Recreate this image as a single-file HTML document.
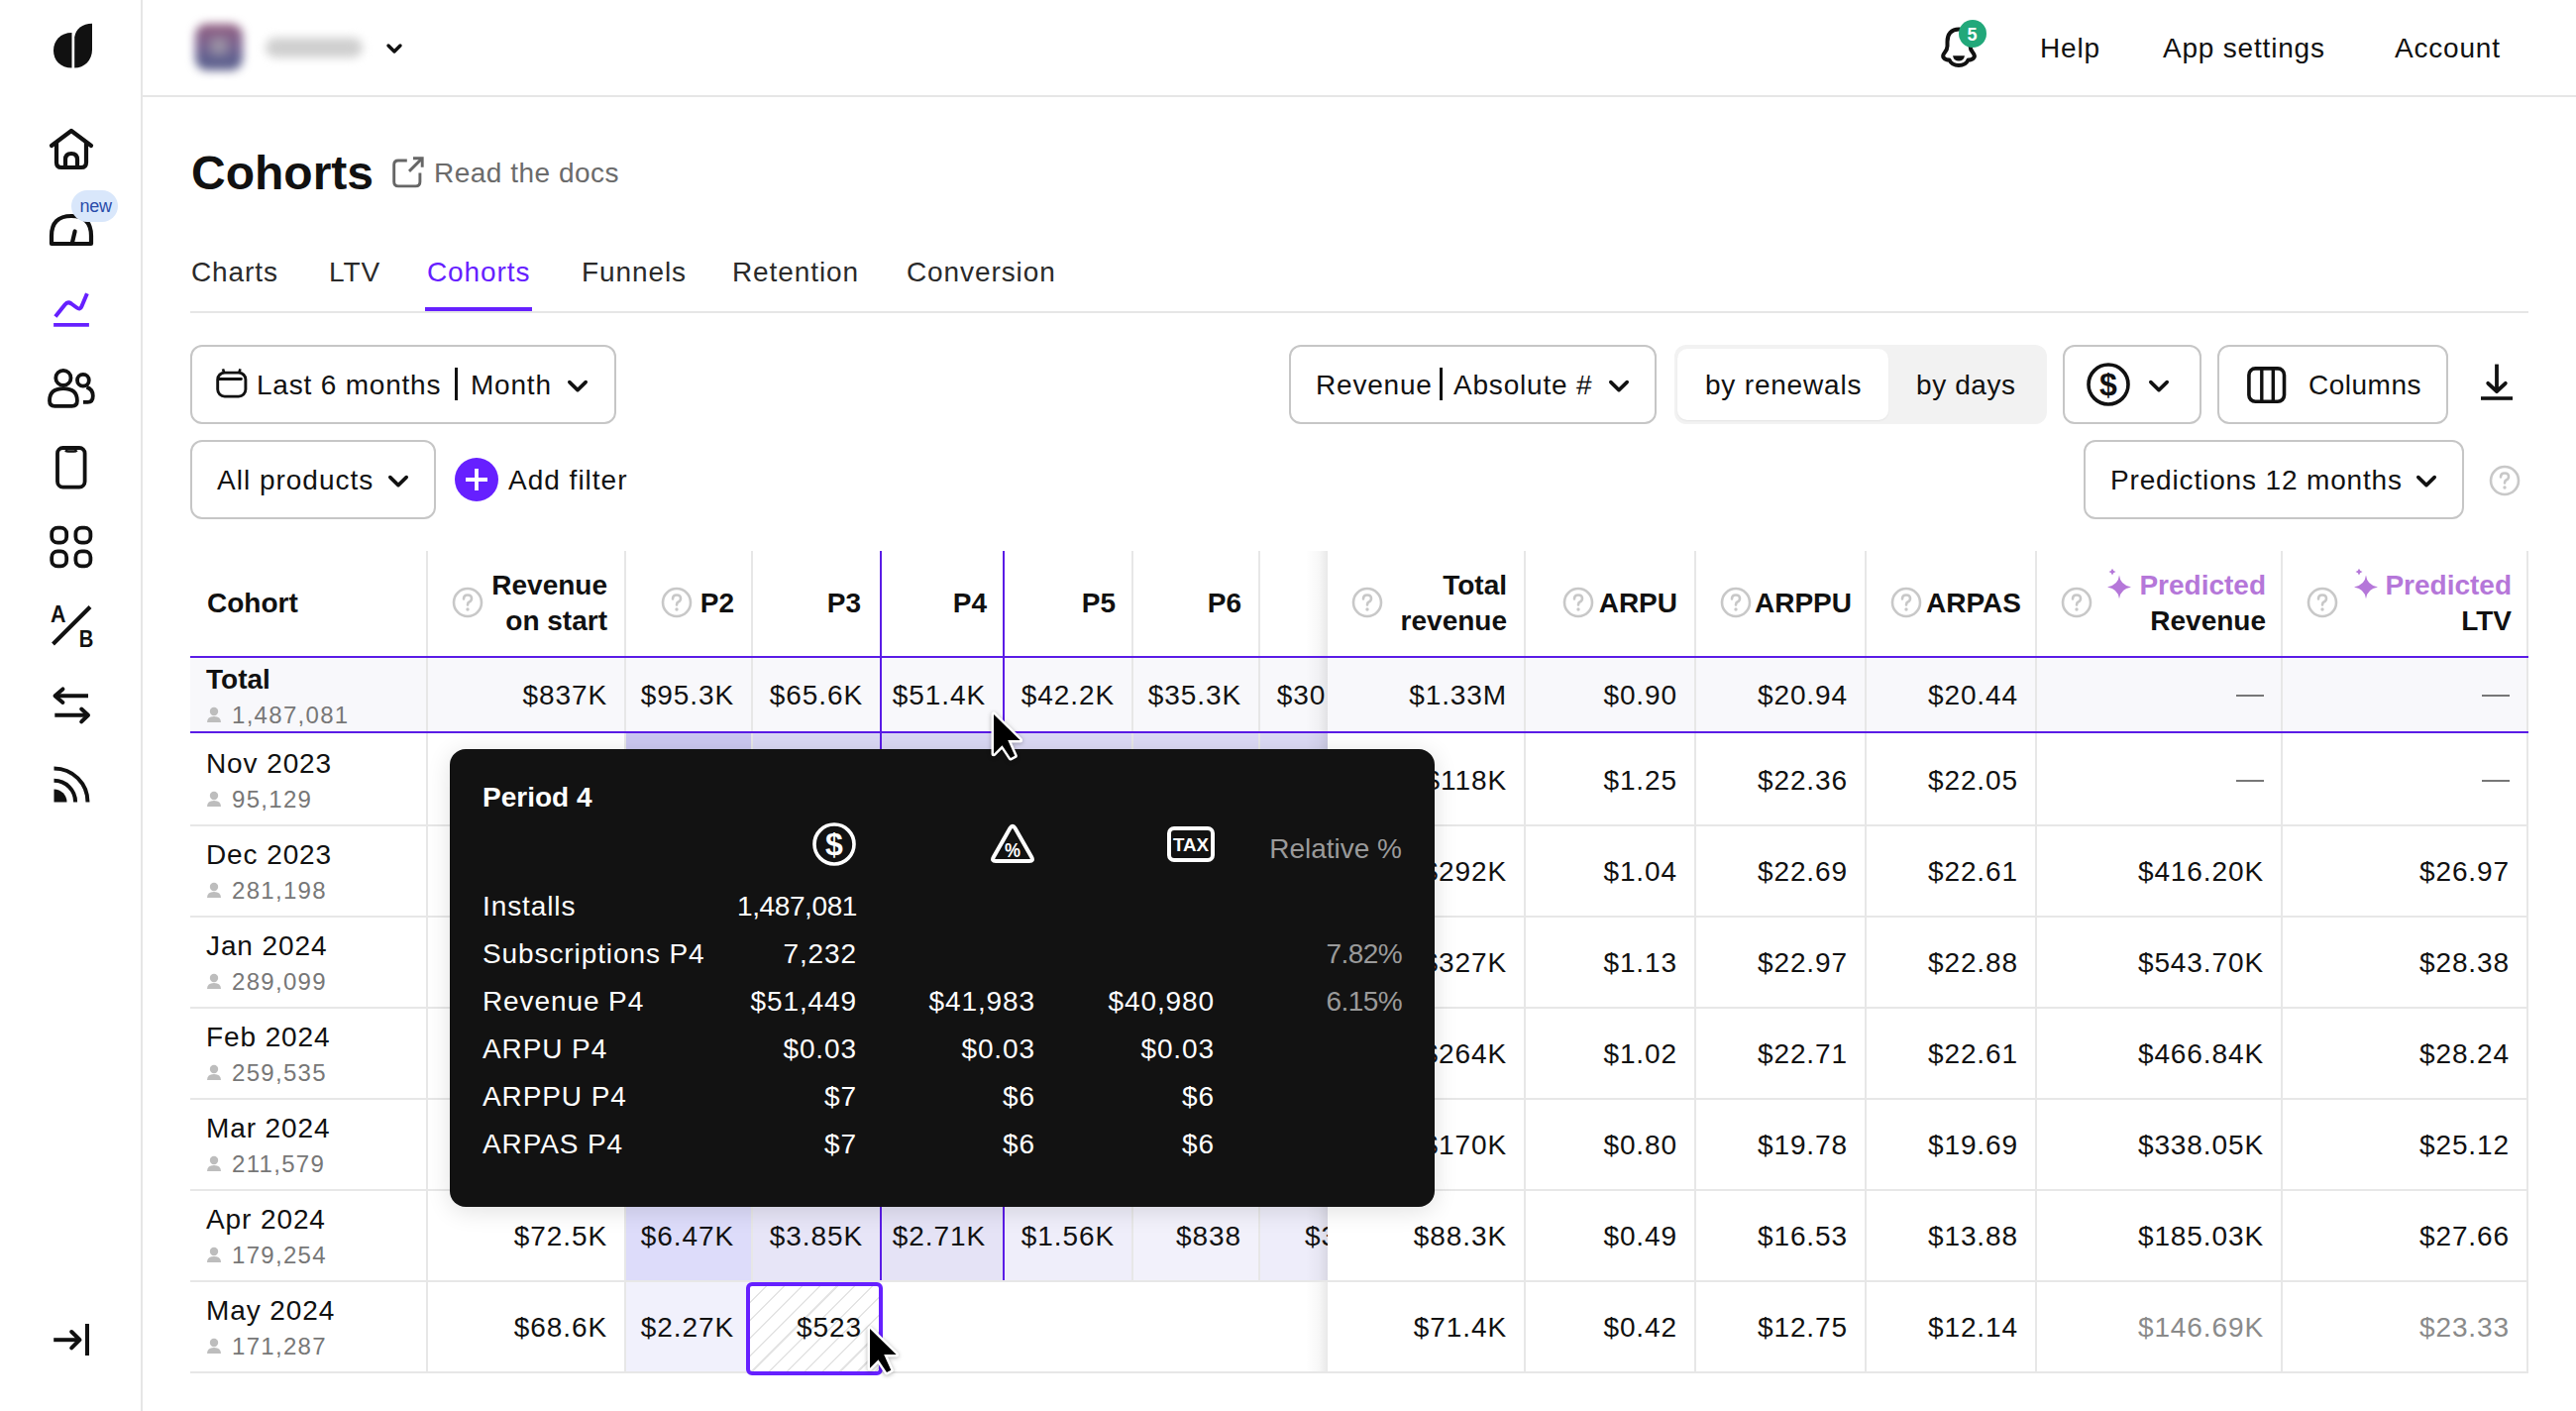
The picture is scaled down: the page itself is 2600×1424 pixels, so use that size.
<!DOCTYPE html>
<html><head><meta charset="utf-8"><style>
html,body{margin:0;padding:0;background:#fff;}
body{width:2600px;height:1424px;position:relative;overflow:hidden;font-family:"Liberation Sans",sans-serif;}
.t{position:absolute;white-space:nowrap;}
.b{position:absolute;}
</style></head><body>
<div class="b" style="left:142px;top:0px;width:2px;height:1424px;background:#e6e6e6"></div>
<svg class="b" style="left:50px;top:22px;" width="48" height="50" viewBox="0 0 48 50" fill="none"><path d="M22.5 11 C11 11 4 19 4 29 C4 39 11 46.5 22.5 46.5 Z" fill="#111"/><path d="M25.2 46.5 V15.5 C26.5 7 33 2 43 1.8 V28 C43 39 35 46.5 25.2 46.5 Z" fill="#111"/></svg>
<svg class="b" style="left:48px;top:128px;" width="48" height="46" viewBox="0 0 48 46" fill="none"><path d="M4 19 L24 4 L44 19" stroke="#111" stroke-width="4.2" stroke-linecap="round" stroke-linejoin="round"/><path d="M9 15 V36 Q9 41 14 41 H34 Q39 41 39 36 V15" stroke="#111" stroke-width="4.2" stroke-linejoin="round"/><path d="M18 41 V33 Q18 27 24 27 Q30 27 30 33 V41" stroke="#111" stroke-width="4.2"/></svg>
<svg class="b" style="left:48px;top:207px;" width="48" height="44" viewBox="0 0 48 44" fill="none"><path d="M4 39 V31 Q4 11 24 11 Q44 11 44 31 V39 Z" stroke="#111" stroke-width="4.2" stroke-linejoin="round"/><path d="M24.9 38 L27.6 26.5" stroke="#111" stroke-width="4.2" stroke-linecap="round"/></svg>
<div class="b" style="left:72px;top:192px;width:47px;height:32px;background:#d9e7fb;border-radius:16px"></div>
<div class="t " style="top:199.06px;font-size:18px;line-height:18px;color:#2a4caa;font-weight:400;letter-spacing:-0.3px;left:80.5px;">new</div>
<svg class="b" style="left:50px;top:288px;" width="46" height="46" viewBox="0 0 46 46" fill="none"><path d="M5.9 31.6 L15.5 19.5 Q18.3 16 22 18.5 L27.5 22.5 Q31 25 32.5 21 L37.9 8.3" stroke="#6620ff" stroke-width="4" stroke-linejoin="round"/><path d="M4.1 39.9 H39.9" stroke="#6620ff" stroke-width="3.8"/></svg>
<svg class="b" style="left:46px;top:366px;" width="52" height="48" viewBox="0 0 52 48" fill="none"><circle cx="17.9" cy="15.4" r="7.6" stroke="#111" stroke-width="3.8"/><path d="M4 38.5 Q4 26.2 18 26.2 Q31.9 26.2 31.9 38.5 Q31.9 43.8 26.6 43.8 H9.3 Q4 43.8 4 38.5 Z" stroke="#111" stroke-width="3.8" stroke-linejoin="round"/><circle cx="37.9" cy="17.7" r="5.9" stroke="#111" stroke-width="3.8"/><path d="M38 39.9 H42.5 Q47.8 39.9 47.8 33.5 Q47.8 27 41.5 24.6" stroke="#111" stroke-width="3.8"/></svg>
<svg class="b" style="left:48px;top:446px;" width="48" height="48" viewBox="0 0 48 48" fill="none"><rect x="10" y="6" width="27.6" height="39.6" rx="5.5" stroke="#111" stroke-width="3.8"/><path d="M18 8.3 Q19 9.5 21 9.5 H26.6 Q28.6 9.5 29.6 8.3" stroke="#111" stroke-width="2.6"/></svg>
<svg class="b" style="left:46px;top:524px;" width="52" height="52" viewBox="0 0 52 52" fill="none"><rect x="6.2" y="8.7" width="15" height="15" rx="6" stroke="#111" stroke-width="3.8"/><rect x="30.4" y="8.7" width="15" height="15" rx="6" stroke="#111" stroke-width="3.8"/><rect x="6.2" y="32.4" width="15" height="15" rx="6" stroke="#111" stroke-width="3.8"/><rect x="30.4" y="32.4" width="15" height="15" rx="6" stroke="#111" stroke-width="3.8"/></svg>
<svg class="b" style="left:46px;top:602px;" width="52" height="52" viewBox="0 0 52 52" fill="none"><path d="M7.5 48 L45 10.5" stroke="#111" stroke-width="4"/><text x="5" y="25.5" font-family="Liberation Sans" font-weight="700" font-size="24" textLength="15.5" lengthAdjust="spacingAndGlyphs" fill="#111">A</text><text x="33.8" y="50.8" font-family="Liberation Sans" font-weight="700" font-size="23.5" textLength="14.6" lengthAdjust="spacingAndGlyphs" fill="#111">B</text></svg>
<svg class="b" style="left:46px;top:684px;" width="52" height="50" viewBox="0 0 52 50" fill="none"><path d="M9.5 18.2 H43" stroke="#111" stroke-width="4"/><path d="M17.4 11.4 L9.5 18.2 L17.4 25" stroke="#111" stroke-width="4" stroke-linecap="round" stroke-linejoin="round"/><path d="M9.3 37.8 H42.5" stroke="#111" stroke-width="4"/><path d="M36.2 31.6 L43 37.8 L36.2 44.4" stroke="#111" stroke-width="4" stroke-linecap="round" stroke-linejoin="round"/></svg>
<svg class="b" style="left:46px;top:762px;" width="52" height="50" viewBox="0 0 52 50" fill="none"><path d="M8.5 13.4 A34 34 0 0 1 42.5 47.4" stroke="#111" stroke-width="4"/><path d="M8.5 25.8 A21.6 21.6 0 0 1 30.1 47.4" stroke="#111" stroke-width="4"/><path d="M8.5 47.4 V34.4 A13 13 0 0 1 21.5 47.4 Z" fill="#111"/></svg>
<svg class="b" style="left:50px;top:1330px;" width="46" height="42" viewBox="0 0 46 42" fill="none"><path d="M4.2 22.2 H30" stroke="#111" stroke-width="4"/><path d="M22.2 14 L30.5 22.2 L22.2 30.4" stroke="#111" stroke-width="4" stroke-linecap="round" stroke-linejoin="round"/><path d="M38 6 V38" stroke="#111" stroke-width="4"/></svg>
<div class="b" style="left:144px;top:96px;width:2456px;height:2px;background:#e6e6e6"></div>
<div class="b" style="left:197px;top:24px;width:48px;height:47px;background:radial-gradient(circle at 50% 48%, #a6a2ac 0, rgba(166,162,172,0.6) 18%, rgba(0,0,0,0) 40%),linear-gradient(180deg,#935f80 0%,#7a6390 45%,#5e6290 80%,#5b5b88 100%);border-radius:12px;filter:blur(5px)"></div>
<div class="b" style="left:268px;top:38px;width:98px;height:20px;background:#cfcfcf;border-radius:10px;filter:blur(5px)"></div>
<svg class="b" style="left:389px;top:43px;" width="18" height="12" viewBox="0 0 18 12" fill="none"><path d="M3 3 L9 9 L15 3" stroke="#111" stroke-width="3.4" stroke-linecap="round" stroke-linejoin="round"/></svg>
<svg class="b" style="left:1956px;top:26px;" width="44" height="46" viewBox="0 0 44 46" fill="none"><path d="M21 3.5 C13.5 3.5 9.5 8.5 9.5 16 V20.5 Q9.5 24 6.5 27.5 Q4 30.5 6 32.5 Q7.5 34.5 11.5 34.5 Q14 40 21 40 Q28 40 30.5 34.5 Q34.5 34.5 36 32.5 Q38 30.5 35.5 27.5 Q32.5 24 32.5 20.5 V16 C32.5 8.5 28.5 3.5 21 3.5 Z" stroke="#111" stroke-width="4" stroke-linejoin="round"/><path d="M15 30.2 H27 Q26 35.6 21 35.6 Q16 35.6 15 30.2 Z" fill="#111"/></svg>
<div class="b" style="left:1977px;top:20px;width:28px;height:28px;background:#22a87a;border-radius:50%"></div>
<div class="t " style="top:25.56px;font-size:18px;line-height:18px;color:#fff;font-weight:700;letter-spacing:0.0px;left:1985.5px;">5</div>
<div class="t " style="top:35.10px;font-size:28px;line-height:28px;color:#111;font-weight:400;letter-spacing:0.8px;left:2059px;">Help</div>
<div class="t " style="top:35.10px;font-size:28px;line-height:28px;color:#111;font-weight:400;letter-spacing:0.8px;left:2183px;">App settings</div>
<div class="t " style="top:35.10px;font-size:28px;line-height:28px;color:#111;font-weight:400;letter-spacing:0.8px;left:2417px;">Account</div>
<div class="t " style="top:151.17px;font-size:48px;line-height:48px;color:#111;font-weight:700;letter-spacing:0.0px;left:193px;">Cohorts</div>
<svg class="b" style="left:394px;top:156px;" width="36" height="36" viewBox="0 0 36 36" fill="none"><path d="M16.8 6 H8 Q3.7 6 3.7 10.3 V27.6 Q3.7 31.9 8 31.9 H25.6 Q29.9 31.9 29.9 27.6 V18.6" stroke="#666" stroke-width="2.9"/><path d="M23 3.8 H32.2 V12.8" stroke="#666" stroke-width="2.9"/><path d="M32 3.9 L19 16.9" stroke="#666" stroke-width="2.9"/></svg>
<div class="t " style="top:161.10px;font-size:28px;line-height:28px;color:#6b6b6b;font-weight:400;letter-spacing:0.5px;left:438px;">Read the docs</div>
<div class="t " style="top:261.10px;font-size:28px;line-height:28px;color:#2a2a2a;font-weight:400;letter-spacing:0.9px;left:193px;">Charts</div>
<div class="t " style="top:261.10px;font-size:28px;line-height:28px;color:#2a2a2a;font-weight:400;letter-spacing:0.9px;left:332px;">LTV</div>
<div class="t " style="top:261.10px;font-size:28px;line-height:28px;color:#2a2a2a;font-weight:400;letter-spacing:0.9px;left:587px;">Funnels</div>
<div class="t " style="top:261.10px;font-size:28px;line-height:28px;color:#2a2a2a;font-weight:400;letter-spacing:0.9px;left:739px;">Retention</div>
<div class="t " style="top:261.10px;font-size:28px;line-height:28px;color:#2a2a2a;font-weight:400;letter-spacing:0.9px;left:915px;">Conversion</div>
<div class="t " style="top:261.10px;font-size:28px;line-height:28px;color:#6620ff;font-weight:400;letter-spacing:0.9px;left:431px;">Cohorts</div>
<div class="b" style="left:192px;top:314px;width:2360px;height:2px;background:#e6e6e6"></div>
<div class="b" style="left:429px;top:310px;width:108px;height:4px;background:#6620ff"></div>
<div class="b" style="left:192px;top:348px;width:430px;height:80px;border:2px solid #c6c6c6;border-radius:12px;box-sizing:border-box;background:#fff"></div>
<svg class="b" style="left:216px;top:370px;" width="36" height="34" viewBox="0 0 36 34" fill="none"><rect x="3.7" y="6.1" width="28.2" height="24" rx="7" stroke="#111" stroke-width="2.9"/><path d="M4.8 12.5 H27.4" stroke="#111" stroke-width="2.9" stroke-linecap="round"/><path d="M9 2.4 L10 5.5 M26.5 2.4 L25.5 5.5" stroke="#111" stroke-width="2.6"/></svg>
<div class="t " style="top:375.10px;font-size:28px;line-height:28px;color:#111;font-weight:400;letter-spacing:0.8px;left:259px;">Last 6 months</div>
<div class="b" style="left:459px;top:371px;width:3px;height:33px;background:#111"></div>
<div class="t " style="top:375.10px;font-size:28px;line-height:28px;color:#111;font-weight:400;letter-spacing:0.8px;left:475px;">Month</div>
<svg class="b" style="left:572px;top:383px;" width="22" height="14" viewBox="0 0 22 14" fill="none"><path d="M2.8 2.6 L11 10.6 L19.2 2.6" stroke="#111" stroke-width="3.6" stroke-linecap="round" stroke-linejoin="round"/></svg>
<div class="b" style="left:1301px;top:348px;width:371px;height:80px;border:2px solid #c6c6c6;border-radius:12px;box-sizing:border-box;background:#fff"></div>
<div class="t " style="top:375.10px;font-size:28px;line-height:28px;color:#111;font-weight:400;letter-spacing:0.8px;left:1328px;">Revenue</div>
<div class="b" style="left:1453px;top:371px;width:3px;height:33px;background:#111"></div>
<div class="t " style="top:375.10px;font-size:28px;line-height:28px;color:#111;font-weight:400;letter-spacing:0.8px;left:1467px;">Absolute #</div>
<svg class="b" style="left:1623px;top:383px;" width="22" height="14" viewBox="0 0 22 14" fill="none"><path d="M2.8 2.6 L11 10.6 L19.2 2.6" stroke="#111" stroke-width="3.6" stroke-linecap="round" stroke-linejoin="round"/></svg>
<div class="b" style="left:1690px;top:348px;width:376px;height:80px;background:#f2f2f2;border-radius:12px"></div>
<div class="b" style="left:1693px;top:352px;width:213px;height:72px;background:#fff;border-radius:10px;box-shadow:0 1px 2px rgba(0,0,0,0.06)"></div>
<div class="t " style="top:375.10px;font-size:28px;line-height:28px;color:#111;font-weight:400;letter-spacing:0.8px;left:1721px;">by renewals</div>
<div class="t " style="top:375.10px;font-size:28px;line-height:28px;color:#111;font-weight:400;letter-spacing:0.6px;left:1934px;">by days</div>
<div class="b" style="left:2082px;top:348px;width:140px;height:80px;border:2px solid #c6c6c6;border-radius:12px;box-sizing:border-box;background:#fff"></div>
<svg class="b" style="left:2104px;top:364px;" width="48" height="48" viewBox="0 0 48 48" fill="none"><circle cx="24" cy="24" r="20" stroke="#111" stroke-width="3.6"/><text x="24" y="35" text-anchor="middle" font-family="Liberation Sans" font-weight="700" font-size="32" fill="#111">$</text></svg>
<svg class="b" style="left:2168px;top:383px;" width="22" height="14" viewBox="0 0 22 14" fill="none"><path d="M2.8 2.6 L11 10.6 L19.2 2.6" stroke="#111" stroke-width="3.6" stroke-linecap="round" stroke-linejoin="round"/></svg>
<div class="b" style="left:2238px;top:348px;width:233px;height:80px;border:2px solid #c6c6c6;border-radius:12px;box-sizing:border-box;background:#fff"></div>
<svg class="b" style="left:2266px;top:368px;" width="44" height="40" viewBox="0 0 44 40" fill="none"><rect x="3.9" y="3.9" width="35.6" height="33.4" rx="6.5" stroke="#111" stroke-width="3.6"/><path d="M16.8 3.9 V37 M28.3 3.9 V37" stroke="#111" stroke-width="3.4"/></svg>
<div class="t " style="top:375.10px;font-size:28px;line-height:28px;color:#111;font-weight:400;letter-spacing:0.5px;left:2330px;">Columns</div>
<svg class="b" style="left:2500px;top:366px;" width="40" height="40" viewBox="0 0 40 40" fill="none"><path d="M20 1.6 V28" stroke="#111" stroke-width="3.8"/><path d="M11.2 20.8 L20 29 L28.8 20.8" stroke="#111" stroke-width="3.8" stroke-linecap="round" stroke-linejoin="round"/><path d="M4 36 H36" stroke="#111" stroke-width="3.6"/></svg>
<div class="b" style="left:192px;top:444px;width:248px;height:80px;border:2px solid #c6c6c6;border-radius:12px;box-sizing:border-box;background:#fff"></div>
<div class="t " style="top:471.10px;font-size:28px;line-height:28px;color:#111;font-weight:400;letter-spacing:1.0px;left:219px;">All products</div>
<svg class="b" style="left:391px;top:479px;" width="22" height="14" viewBox="0 0 22 14" fill="none"><path d="M2.8 2.6 L11 10.6 L19.2 2.6" stroke="#111" stroke-width="3.6" stroke-linecap="round" stroke-linejoin="round"/></svg>
<div class="b" style="left:459px;top:462px;width:44px;height:44px;background:#6620ff;border-radius:50%"></div>
<svg class="b" style="left:459px;top:462px;" width="44" height="44" viewBox="0 0 44 44" fill="none"><path d="M22 11 V33 M11 22 H33" stroke="#fff" stroke-width="3.8"/></svg>
<div class="t " style="top:471.10px;font-size:28px;line-height:28px;color:#111;font-weight:400;letter-spacing:1.0px;left:513px;">Add filter</div>
<div class="b" style="left:2103px;top:444px;width:384px;height:80px;border:2px solid #c6c6c6;border-radius:12px;box-sizing:border-box;background:#fff"></div>
<div class="t " style="top:471.10px;font-size:28px;line-height:28px;color:#111;font-weight:400;letter-spacing:0.85px;left:2130px;">Predictions 12 months</div>
<svg class="b" style="left:2438px;top:479px;" width="22" height="14" viewBox="0 0 22 14" fill="none"><path d="M2.8 2.6 L11 10.6 L19.2 2.6" stroke="#111" stroke-width="3.6" stroke-linecap="round" stroke-linejoin="round"/></svg>
<svg class="b" style="left:2512px;top:469px;" width="32" height="32" viewBox="0 0 32 32" fill="none"><circle cx="16" cy="16" r="14" stroke="#c8c8c8" stroke-width="2.6"/><path d="M12 12.5 Q12 8.5 16 8.5 Q20 8.5 20 12 Q20 14.5 17.5 15.5 Q16 16.2 16 18.5" stroke="#c8c8c8" stroke-width="2.6" stroke-linecap="round" fill="none"/><circle cx="16" cy="23" r="1.7" fill="#c8c8c8"/></svg>
<div class="b" style="left:192px;top:664px;width:1148px;height:74px;background:#f8f8fb"></div>
<div class="b" style="left:632px;top:740px;width:126px;height:92px;background:#cbc7f1"></div>
<div class="b" style="left:760px;top:740px;width:128px;height:92px;background:#dad8f4"></div>
<div class="b" style="left:890px;top:740px;width:122px;height:92px;background:#dad8f4"></div>
<div class="b" style="left:1014px;top:740px;width:128px;height:92px;background:#dcdaf5"></div>
<div class="b" style="left:1144px;top:740px;width:126px;height:92px;background:#dcdaf5"></div>
<div class="b" style="left:1272px;top:740px;width:128px;height:92px;background:#dcdaf5"></div>
<div class="b" style="left:632px;top:834px;width:126px;height:90px;background:#d9d6f6"></div>
<div class="b" style="left:760px;top:834px;width:128px;height:90px;background:#e3e1f7"></div>
<div class="b" style="left:890px;top:834px;width:122px;height:90px;background:#e3e1f7"></div>
<div class="b" style="left:1014px;top:834px;width:128px;height:90px;background:#e8e7f8"></div>
<div class="b" style="left:1144px;top:834px;width:126px;height:90px;background:#ecebfa"></div>
<div class="b" style="left:1272px;top:834px;width:128px;height:90px;background:#ecebfa"></div>
<div class="b" style="left:632px;top:926px;width:126px;height:90px;background:#d9d6f6"></div>
<div class="b" style="left:760px;top:926px;width:128px;height:90px;background:#e3e1f7"></div>
<div class="b" style="left:890px;top:926px;width:122px;height:90px;background:#e3e1f7"></div>
<div class="b" style="left:1014px;top:926px;width:128px;height:90px;background:#e8e7f8"></div>
<div class="b" style="left:1144px;top:926px;width:126px;height:90px;background:#ecebfa"></div>
<div class="b" style="left:1272px;top:926px;width:128px;height:90px;background:#ecebfa"></div>
<div class="b" style="left:632px;top:1018px;width:126px;height:90px;background:#d9d6f6"></div>
<div class="b" style="left:760px;top:1018px;width:128px;height:90px;background:#e3e1f7"></div>
<div class="b" style="left:890px;top:1018px;width:122px;height:90px;background:#e3e1f7"></div>
<div class="b" style="left:1014px;top:1018px;width:128px;height:90px;background:#e8e7f8"></div>
<div class="b" style="left:1144px;top:1018px;width:126px;height:90px;background:#ecebfa"></div>
<div class="b" style="left:1272px;top:1018px;width:128px;height:90px;background:#ecebfa"></div>
<div class="b" style="left:632px;top:1110px;width:126px;height:90px;background:#d9d6f6"></div>
<div class="b" style="left:760px;top:1110px;width:128px;height:90px;background:#e3e1f7"></div>
<div class="b" style="left:890px;top:1110px;width:122px;height:90px;background:#e3e1f7"></div>
<div class="b" style="left:1014px;top:1110px;width:128px;height:90px;background:#e8e7f8"></div>
<div class="b" style="left:1144px;top:1110px;width:126px;height:90px;background:#ecebfa"></div>
<div class="b" style="left:1272px;top:1110px;width:128px;height:90px;background:#ecebfa"></div>
<div class="b" style="left:632px;top:1202px;width:126px;height:90px;background:#dddcfa"></div>
<div class="b" style="left:760px;top:1202px;width:128px;height:90px;background:#e7e5f7"></div>
<div class="b" style="left:890px;top:1202px;width:122px;height:90px;background:#e5e3f6"></div>
<div class="b" style="left:1014px;top:1202px;width:128px;height:90px;background:#efeefa"></div>
<div class="b" style="left:1144px;top:1202px;width:126px;height:90px;background:#f2f1fb"></div>
<div class="b" style="left:1272px;top:1202px;width:128px;height:90px;background:#eeedfa"></div>
<div class="b" style="left:632px;top:1294px;width:126px;height:90px;background:#f1f1fc"></div>
<div class="b" style="left:430px;top:556px;width:2px;height:828px;background:#e7e7e7"></div>
<div class="b" style="left:630px;top:556px;width:2px;height:828px;background:#e7e7e7"></div>
<div class="b" style="left:758px;top:556px;width:2px;height:828px;background:#e7e7e7"></div>
<div class="b" style="left:1142px;top:556px;width:2px;height:736px;background:#e7e7e7"></div>
<div class="b" style="left:1270px;top:556px;width:2px;height:736px;background:#e7e7e7"></div>
<div class="b" style="left:888px;top:556px;width:2px;height:736px;background:#5a1ce6"></div>
<div class="b" style="left:1012px;top:556px;width:2px;height:736px;background:#5a1ce6"></div>
<div class="t " style="top:594.60px;font-size:28px;line-height:28px;color:#111;font-weight:700;letter-spacing:0.0px;left:209px;">Cohort</div>
<div class="t " style="top:577.10px;font-size:28px;line-height:28px;color:#111;font-weight:700;letter-spacing:0.0px;left:313px;width:300px;text-align:right;">Revenue</div>
<div class="t " style="top:612.60px;font-size:28px;line-height:28px;color:#111;font-weight:700;letter-spacing:0.0px;left:313px;width:300px;text-align:right;">on start</div>
<svg class="b" style="left:456px;top:592px;" width="32" height="32" viewBox="0 0 32 32" fill="none"><circle cx="16" cy="16" r="14" stroke="#c8c8c8" stroke-width="2.6"/><path d="M12 12.5 Q12 8.5 16 8.5 Q20 8.5 20 12 Q20 14.5 17.5 15.5 Q16 16.2 16 18.5" stroke="#c8c8c8" stroke-width="2.6" stroke-linecap="round" fill="none"/><circle cx="16" cy="23" r="1.7" fill="#c8c8c8"/></svg>
<div class="t " style="top:594.60px;font-size:28px;line-height:28px;color:#111;font-weight:700;letter-spacing:0.0px;left:441px;width:300px;text-align:right;">P2</div>
<svg class="b" style="left:667px;top:592px;" width="32" height="32" viewBox="0 0 32 32" fill="none"><circle cx="16" cy="16" r="14" stroke="#c8c8c8" stroke-width="2.6"/><path d="M12 12.5 Q12 8.5 16 8.5 Q20 8.5 20 12 Q20 14.5 17.5 15.5 Q16 16.2 16 18.5" stroke="#c8c8c8" stroke-width="2.6" stroke-linecap="round" fill="none"/><circle cx="16" cy="23" r="1.7" fill="#c8c8c8"/></svg>
<div class="t " style="top:594.60px;font-size:28px;line-height:28px;color:#111;font-weight:700;letter-spacing:0.0px;left:569px;width:300px;text-align:right;">P3</div>
<div class="t " style="top:594.60px;font-size:28px;line-height:28px;color:#111;font-weight:700;letter-spacing:0.0px;left:696px;width:300px;text-align:right;">P4</div>
<div class="t " style="top:594.60px;font-size:28px;line-height:28px;color:#111;font-weight:700;letter-spacing:0.0px;left:826px;width:300px;text-align:right;">P5</div>
<div class="t " style="top:594.60px;font-size:28px;line-height:28px;color:#111;font-weight:700;letter-spacing:0.0px;left:953px;width:300px;text-align:right;">P6</div>
<div class="t " style="top:672.10px;font-size:28px;line-height:28px;color:#111;font-weight:700;letter-spacing:0.0px;left:208px;">Total</div>
<svg class="b" style="left:208px;top:713px;" width="16" height="17" viewBox="0 0 16 17" fill="none"><circle cx="8" cy="5" r="4.2" fill="#bdbdbd"/><path d="M1 16 Q1 10 8 10 Q15 10 15 16 Z" fill="#bdbdbd"/></svg>
<div class="t " style="top:710.48px;font-size:24px;line-height:24px;color:#777;font-weight:400;letter-spacing:1.3px;left:234px;">1,487,081</div>
<div class="t " style="top:688.10px;font-size:28px;line-height:28px;color:#111;font-weight:400;letter-spacing:0.9px;left:413px;width:200px;text-align:right;">$837K</div>
<div class="t " style="top:688.10px;font-size:28px;line-height:28px;color:#111;font-weight:400;letter-spacing:0.9px;left:541px;width:200px;text-align:right;">$95.3K</div>
<div class="t " style="top:688.10px;font-size:28px;line-height:28px;color:#111;font-weight:400;letter-spacing:0.9px;left:671px;width:200px;text-align:right;">$65.6K</div>
<div class="t " style="top:688.10px;font-size:28px;line-height:28px;color:#111;font-weight:400;letter-spacing:0.9px;left:795px;width:200px;text-align:right;">$51.4K</div>
<div class="t " style="top:688.10px;font-size:28px;line-height:28px;color:#111;font-weight:400;letter-spacing:0.9px;left:925px;width:200px;text-align:right;">$42.2K</div>
<div class="t " style="top:688.10px;font-size:28px;line-height:28px;color:#111;font-weight:400;letter-spacing:0.9px;left:1053px;width:200px;text-align:right;">$35.3K</div>
<div class="t " style="top:688.10px;font-size:28px;line-height:28px;color:#111;font-weight:400;letter-spacing:0.9px;left:1183px;width:200px;text-align:right;">$30.4K</div>
<div class="t " style="top:757.10px;font-size:28px;line-height:28px;color:#111;font-weight:400;letter-spacing:0.9px;left:208px;">Nov 2023</div>
<svg class="b" style="left:208px;top:798px;" width="16" height="17" viewBox="0 0 16 17" fill="none"><circle cx="8" cy="5" r="4.2" fill="#bdbdbd"/><path d="M1 16 Q1 10 8 10 Q15 10 15 16 Z" fill="#bdbdbd"/></svg>
<div class="t " style="top:795.48px;font-size:24px;line-height:24px;color:#777;font-weight:400;letter-spacing:1.3px;left:234px;">95,129</div>
<div class="t " style="top:849.10px;font-size:28px;line-height:28px;color:#111;font-weight:400;letter-spacing:0.9px;left:208px;">Dec 2023</div>
<svg class="b" style="left:208px;top:890px;" width="16" height="17" viewBox="0 0 16 17" fill="none"><circle cx="8" cy="5" r="4.2" fill="#bdbdbd"/><path d="M1 16 Q1 10 8 10 Q15 10 15 16 Z" fill="#bdbdbd"/></svg>
<div class="t " style="top:887.48px;font-size:24px;line-height:24px;color:#777;font-weight:400;letter-spacing:1.3px;left:234px;">281,198</div>
<div class="t " style="top:941.10px;font-size:28px;line-height:28px;color:#111;font-weight:400;letter-spacing:0.9px;left:208px;">Jan 2024</div>
<svg class="b" style="left:208px;top:982px;" width="16" height="17" viewBox="0 0 16 17" fill="none"><circle cx="8" cy="5" r="4.2" fill="#bdbdbd"/><path d="M1 16 Q1 10 8 10 Q15 10 15 16 Z" fill="#bdbdbd"/></svg>
<div class="t " style="top:979.48px;font-size:24px;line-height:24px;color:#777;font-weight:400;letter-spacing:1.3px;left:234px;">289,099</div>
<div class="t " style="top:1033.10px;font-size:28px;line-height:28px;color:#111;font-weight:400;letter-spacing:0.9px;left:208px;">Feb 2024</div>
<svg class="b" style="left:208px;top:1074px;" width="16" height="17" viewBox="0 0 16 17" fill="none"><circle cx="8" cy="5" r="4.2" fill="#bdbdbd"/><path d="M1 16 Q1 10 8 10 Q15 10 15 16 Z" fill="#bdbdbd"/></svg>
<div class="t " style="top:1071.48px;font-size:24px;line-height:24px;color:#777;font-weight:400;letter-spacing:1.3px;left:234px;">259,535</div>
<div class="t " style="top:1125.10px;font-size:28px;line-height:28px;color:#111;font-weight:400;letter-spacing:0.9px;left:208px;">Mar 2024</div>
<svg class="b" style="left:208px;top:1166px;" width="16" height="17" viewBox="0 0 16 17" fill="none"><circle cx="8" cy="5" r="4.2" fill="#bdbdbd"/><path d="M1 16 Q1 10 8 10 Q15 10 15 16 Z" fill="#bdbdbd"/></svg>
<div class="t " style="top:1163.48px;font-size:24px;line-height:24px;color:#777;font-weight:400;letter-spacing:1.3px;left:234px;">211,579</div>
<div class="t " style="top:1217.10px;font-size:28px;line-height:28px;color:#111;font-weight:400;letter-spacing:0.9px;left:208px;">Apr 2024</div>
<svg class="b" style="left:208px;top:1258px;" width="16" height="17" viewBox="0 0 16 17" fill="none"><circle cx="8" cy="5" r="4.2" fill="#bdbdbd"/><path d="M1 16 Q1 10 8 10 Q15 10 15 16 Z" fill="#bdbdbd"/></svg>
<div class="t " style="top:1255.48px;font-size:24px;line-height:24px;color:#777;font-weight:400;letter-spacing:1.3px;left:234px;">179,254</div>
<div class="t " style="top:1234.10px;font-size:28px;line-height:28px;color:#111;font-weight:400;letter-spacing:0.9px;left:413px;width:200px;text-align:right;">$72.5K</div>
<div class="t " style="top:1234.10px;font-size:28px;line-height:28px;color:#111;font-weight:400;letter-spacing:0.9px;left:541px;width:200px;text-align:right;">$6.47K</div>
<div class="t " style="top:1234.10px;font-size:28px;line-height:28px;color:#111;font-weight:400;letter-spacing:0.9px;left:671px;width:200px;text-align:right;">$3.85K</div>
<div class="t " style="top:1234.10px;font-size:28px;line-height:28px;color:#111;font-weight:400;letter-spacing:0.9px;left:795px;width:200px;text-align:right;">$2.71K</div>
<div class="t " style="top:1234.10px;font-size:28px;line-height:28px;color:#111;font-weight:400;letter-spacing:0.9px;left:925px;width:200px;text-align:right;">$1.56K</div>
<div class="t " style="top:1234.10px;font-size:28px;line-height:28px;color:#111;font-weight:400;letter-spacing:0.9px;left:1053px;width:200px;text-align:right;">$838</div>
<div class="t " style="top:1234.10px;font-size:28px;line-height:28px;color:#111;font-weight:400;letter-spacing:0.9px;left:1183px;width:200px;text-align:right;">$320</div>
<div class="t " style="top:1309.10px;font-size:28px;line-height:28px;color:#111;font-weight:400;letter-spacing:0.9px;left:208px;">May 2024</div>
<svg class="b" style="left:208px;top:1350px;" width="16" height="17" viewBox="0 0 16 17" fill="none"><circle cx="8" cy="5" r="4.2" fill="#bdbdbd"/><path d="M1 16 Q1 10 8 10 Q15 10 15 16 Z" fill="#bdbdbd"/></svg>
<div class="t " style="top:1347.48px;font-size:24px;line-height:24px;color:#777;font-weight:400;letter-spacing:1.3px;left:234px;">171,287</div>
<div class="t " style="top:1326.10px;font-size:28px;line-height:28px;color:#111;font-weight:400;letter-spacing:0.9px;left:413px;width:200px;text-align:right;">$68.6K</div>
<div class="t " style="top:1326.10px;font-size:28px;line-height:28px;color:#111;font-weight:400;letter-spacing:0.9px;left:541px;width:200px;text-align:right;">$2.27K</div>
<div class="b" style="left:1318px;top:556px;width:22px;height:830px;background:linear-gradient(to right, rgba(0,0,0,0), rgba(0,0,0,0.03) 60%, rgba(0,0,0,0.09))"></div>
<div class="b" style="left:1340px;top:556px;width:1212px;height:830px;background:#fff"></div>
<div class="b" style="left:1340px;top:664px;width:1212px;height:74px;background:#f8f8fb"></div>
<div class="b" style="left:1538px;top:556px;width:2px;height:830px;background:#e7e7e7"></div>
<div class="b" style="left:1710px;top:556px;width:2px;height:830px;background:#e7e7e7"></div>
<div class="b" style="left:1882px;top:556px;width:2px;height:830px;background:#e7e7e7"></div>
<div class="b" style="left:2054px;top:556px;width:2px;height:830px;background:#e7e7e7"></div>
<div class="b" style="left:2302px;top:556px;width:2px;height:830px;background:#e7e7e7"></div>
<div class="b" style="left:2550px;top:556px;width:2px;height:830px;background:#e7e7e7"></div>
<div class="t " style="top:577.10px;font-size:28px;line-height:28px;color:#111;font-weight:700;letter-spacing:0.0px;left:1221px;width:300px;text-align:right;">Total</div>
<div class="t " style="top:612.60px;font-size:28px;line-height:28px;color:#111;font-weight:700;letter-spacing:0.0px;left:1221px;width:300px;text-align:right;">revenue</div>
<svg class="b" style="left:1364px;top:592px;" width="32" height="32" viewBox="0 0 32 32" fill="none"><circle cx="16" cy="16" r="14" stroke="#c8c8c8" stroke-width="2.6"/><path d="M12 12.5 Q12 8.5 16 8.5 Q20 8.5 20 12 Q20 14.5 17.5 15.5 Q16 16.2 16 18.5" stroke="#c8c8c8" stroke-width="2.6" stroke-linecap="round" fill="none"/><circle cx="16" cy="23" r="1.7" fill="#c8c8c8"/></svg>
<div class="t " style="top:594.60px;font-size:28px;line-height:28px;color:#111;font-weight:700;letter-spacing:0.0px;left:1393px;width:300px;text-align:right;">ARPU</div>
<svg class="b" style="left:1577px;top:592px;" width="32" height="32" viewBox="0 0 32 32" fill="none"><circle cx="16" cy="16" r="14" stroke="#c8c8c8" stroke-width="2.6"/><path d="M12 12.5 Q12 8.5 16 8.5 Q20 8.5 20 12 Q20 14.5 17.5 15.5 Q16 16.2 16 18.5" stroke="#c8c8c8" stroke-width="2.6" stroke-linecap="round" fill="none"/><circle cx="16" cy="23" r="1.7" fill="#c8c8c8"/></svg>
<div class="t " style="top:594.60px;font-size:28px;line-height:28px;color:#111;font-weight:700;letter-spacing:0.0px;left:1569px;width:300px;text-align:right;">ARPPU</div>
<svg class="b" style="left:1736px;top:592px;" width="32" height="32" viewBox="0 0 32 32" fill="none"><circle cx="16" cy="16" r="14" stroke="#c8c8c8" stroke-width="2.6"/><path d="M12 12.5 Q12 8.5 16 8.5 Q20 8.5 20 12 Q20 14.5 17.5 15.5 Q16 16.2 16 18.5" stroke="#c8c8c8" stroke-width="2.6" stroke-linecap="round" fill="none"/><circle cx="16" cy="23" r="1.7" fill="#c8c8c8"/></svg>
<div class="t " style="top:594.60px;font-size:28px;line-height:28px;color:#111;font-weight:700;letter-spacing:0.0px;left:1740px;width:300px;text-align:right;">ARPAS</div>
<svg class="b" style="left:1908px;top:592px;" width="32" height="32" viewBox="0 0 32 32" fill="none"><circle cx="16" cy="16" r="14" stroke="#c8c8c8" stroke-width="2.6"/><path d="M12 12.5 Q12 8.5 16 8.5 Q20 8.5 20 12 Q20 14.5 17.5 15.5 Q16 16.2 16 18.5" stroke="#c8c8c8" stroke-width="2.6" stroke-linecap="round" fill="none"/><circle cx="16" cy="23" r="1.7" fill="#c8c8c8"/></svg>
<div class="t " style="top:577.10px;font-size:28px;line-height:28px;color:#b577d9;font-weight:700;letter-spacing:0.0px;left:1987px;width:300px;text-align:right;">Predicted</div>
<div class="t " style="top:612.60px;font-size:28px;line-height:28px;color:#111;font-weight:700;letter-spacing:0.0px;left:1987px;width:300px;text-align:right;">Revenue</div>
<svg class="b" style="left:2080px;top:592px;" width="32" height="32" viewBox="0 0 32 32" fill="none"><circle cx="16" cy="16" r="14" stroke="#c8c8c8" stroke-width="2.6"/><path d="M12 12.5 Q12 8.5 16 8.5 Q20 8.5 20 12 Q20 14.5 17.5 15.5 Q16 16.2 16 18.5" stroke="#c8c8c8" stroke-width="2.6" stroke-linecap="round" fill="none"/><circle cx="16" cy="23" r="1.7" fill="#c8c8c8"/></svg>
<div class="t " style="top:577.10px;font-size:28px;line-height:28px;color:#b577d9;font-weight:700;letter-spacing:0.0px;left:2235px;width:300px;text-align:right;">Predicted</div>
<div class="t " style="top:612.60px;font-size:28px;line-height:28px;color:#111;font-weight:700;letter-spacing:0.0px;left:2235px;width:300px;text-align:right;">LTV</div>
<svg class="b" style="left:2328px;top:592px;" width="32" height="32" viewBox="0 0 32 32" fill="none"><circle cx="16" cy="16" r="14" stroke="#c8c8c8" stroke-width="2.6"/><path d="M12 12.5 Q12 8.5 16 8.5 Q20 8.5 20 12 Q20 14.5 17.5 15.5 Q16 16.2 16 18.5" stroke="#c8c8c8" stroke-width="2.6" stroke-linecap="round" fill="none"/><circle cx="16" cy="23" r="1.7" fill="#c8c8c8"/></svg>
<svg class="b" style="left:2125px;top:574px;" width="28" height="32" viewBox="0 0 28 32" fill="none"><path d="M14 6.5 Q15 16.5 26 18.4 Q15 20.3 14 30.3 Q13 20.3 2 18.4 Q13 16.5 14 6.5 Z" fill="#b577d9"/><path d="M7 -0.5 Q7.6 2.4 10.5 3 Q7.6 3.6 7 6.5 Q6.4 3.6 3.5 3 Q6.4 2.4 7 -0.5 Z" fill="#b577d9"/></svg>
<svg class="b" style="left:2374px;top:574px;" width="28" height="32" viewBox="0 0 28 32" fill="none"><path d="M14 6.5 Q15 16.5 26 18.4 Q15 20.3 14 30.3 Q13 20.3 2 18.4 Q13 16.5 14 6.5 Z" fill="#b577d9"/><path d="M7 -0.5 Q7.6 2.4 10.5 3 Q7.6 3.6 7 6.5 Q6.4 3.6 3.5 3 Q6.4 2.4 7 -0.5 Z" fill="#b577d9"/></svg>
<div class="t " style="top:688.10px;font-size:28px;line-height:28px;color:#111;font-weight:400;letter-spacing:0.9px;left:1281px;width:240px;text-align:right;">$1.33M</div>
<div class="t " style="top:688.10px;font-size:28px;line-height:28px;color:#111;font-weight:400;letter-spacing:0.9px;left:1453px;width:240px;text-align:right;">$0.90</div>
<div class="t " style="top:688.10px;font-size:28px;line-height:28px;color:#111;font-weight:400;letter-spacing:0.9px;left:1625px;width:240px;text-align:right;">$20.94</div>
<div class="t " style="top:688.10px;font-size:28px;line-height:28px;color:#111;font-weight:400;letter-spacing:0.9px;left:1797px;width:240px;text-align:right;">$20.44</div>
<div class="b" style="left:2257px;top:701px;width:28px;height:2px;background:#777"></div>
<div class="b" style="left:2505px;top:701px;width:28px;height:2px;background:#777"></div>
<div class="t " style="top:774.10px;font-size:28px;line-height:28px;color:#111;font-weight:400;letter-spacing:0.9px;left:1281px;width:240px;text-align:right;">$118K</div>
<div class="t " style="top:774.10px;font-size:28px;line-height:28px;color:#111;font-weight:400;letter-spacing:0.9px;left:1453px;width:240px;text-align:right;">$1.25</div>
<div class="t " style="top:774.10px;font-size:28px;line-height:28px;color:#111;font-weight:400;letter-spacing:0.9px;left:1625px;width:240px;text-align:right;">$22.36</div>
<div class="t " style="top:774.10px;font-size:28px;line-height:28px;color:#111;font-weight:400;letter-spacing:0.9px;left:1797px;width:240px;text-align:right;">$22.05</div>
<div class="b" style="left:2257px;top:787px;width:28px;height:2px;background:#777"></div>
<div class="b" style="left:2505px;top:787px;width:28px;height:2px;background:#777"></div>
<div class="t " style="top:866.10px;font-size:28px;line-height:28px;color:#111;font-weight:400;letter-spacing:0.9px;left:1281px;width:240px;text-align:right;">$292K</div>
<div class="t " style="top:866.10px;font-size:28px;line-height:28px;color:#111;font-weight:400;letter-spacing:0.9px;left:1453px;width:240px;text-align:right;">$1.04</div>
<div class="t " style="top:866.10px;font-size:28px;line-height:28px;color:#111;font-weight:400;letter-spacing:0.9px;left:1625px;width:240px;text-align:right;">$22.69</div>
<div class="t " style="top:866.10px;font-size:28px;line-height:28px;color:#111;font-weight:400;letter-spacing:0.9px;left:1797px;width:240px;text-align:right;">$22.61</div>
<div class="t " style="top:866.10px;font-size:28px;line-height:28px;color:#111;font-weight:400;letter-spacing:0.9px;left:2045px;width:240px;text-align:right;">$416.20K</div>
<div class="t " style="top:866.10px;font-size:28px;line-height:28px;color:#111;font-weight:400;letter-spacing:0.9px;left:2293px;width:240px;text-align:right;">$26.97</div>
<div class="t " style="top:958.10px;font-size:28px;line-height:28px;color:#111;font-weight:400;letter-spacing:0.9px;left:1281px;width:240px;text-align:right;">$327K</div>
<div class="t " style="top:958.10px;font-size:28px;line-height:28px;color:#111;font-weight:400;letter-spacing:0.9px;left:1453px;width:240px;text-align:right;">$1.13</div>
<div class="t " style="top:958.10px;font-size:28px;line-height:28px;color:#111;font-weight:400;letter-spacing:0.9px;left:1625px;width:240px;text-align:right;">$22.97</div>
<div class="t " style="top:958.10px;font-size:28px;line-height:28px;color:#111;font-weight:400;letter-spacing:0.9px;left:1797px;width:240px;text-align:right;">$22.88</div>
<div class="t " style="top:958.10px;font-size:28px;line-height:28px;color:#111;font-weight:400;letter-spacing:0.9px;left:2045px;width:240px;text-align:right;">$543.70K</div>
<div class="t " style="top:958.10px;font-size:28px;line-height:28px;color:#111;font-weight:400;letter-spacing:0.9px;left:2293px;width:240px;text-align:right;">$28.38</div>
<div class="t " style="top:1050.10px;font-size:28px;line-height:28px;color:#111;font-weight:400;letter-spacing:0.9px;left:1281px;width:240px;text-align:right;">$264K</div>
<div class="t " style="top:1050.10px;font-size:28px;line-height:28px;color:#111;font-weight:400;letter-spacing:0.9px;left:1453px;width:240px;text-align:right;">$1.02</div>
<div class="t " style="top:1050.10px;font-size:28px;line-height:28px;color:#111;font-weight:400;letter-spacing:0.9px;left:1625px;width:240px;text-align:right;">$22.71</div>
<div class="t " style="top:1050.10px;font-size:28px;line-height:28px;color:#111;font-weight:400;letter-spacing:0.9px;left:1797px;width:240px;text-align:right;">$22.61</div>
<div class="t " style="top:1050.10px;font-size:28px;line-height:28px;color:#111;font-weight:400;letter-spacing:0.9px;left:2045px;width:240px;text-align:right;">$466.84K</div>
<div class="t " style="top:1050.10px;font-size:28px;line-height:28px;color:#111;font-weight:400;letter-spacing:0.9px;left:2293px;width:240px;text-align:right;">$28.24</div>
<div class="t " style="top:1142.10px;font-size:28px;line-height:28px;color:#111;font-weight:400;letter-spacing:0.9px;left:1281px;width:240px;text-align:right;">$170K</div>
<div class="t " style="top:1142.10px;font-size:28px;line-height:28px;color:#111;font-weight:400;letter-spacing:0.9px;left:1453px;width:240px;text-align:right;">$0.80</div>
<div class="t " style="top:1142.10px;font-size:28px;line-height:28px;color:#111;font-weight:400;letter-spacing:0.9px;left:1625px;width:240px;text-align:right;">$19.78</div>
<div class="t " style="top:1142.10px;font-size:28px;line-height:28px;color:#111;font-weight:400;letter-spacing:0.9px;left:1797px;width:240px;text-align:right;">$19.69</div>
<div class="t " style="top:1142.10px;font-size:28px;line-height:28px;color:#111;font-weight:400;letter-spacing:0.9px;left:2045px;width:240px;text-align:right;">$338.05K</div>
<div class="t " style="top:1142.10px;font-size:28px;line-height:28px;color:#111;font-weight:400;letter-spacing:0.9px;left:2293px;width:240px;text-align:right;">$25.12</div>
<div class="t " style="top:1234.10px;font-size:28px;line-height:28px;color:#111;font-weight:400;letter-spacing:0.9px;left:1281px;width:240px;text-align:right;">$88.3K</div>
<div class="t " style="top:1234.10px;font-size:28px;line-height:28px;color:#111;font-weight:400;letter-spacing:0.9px;left:1453px;width:240px;text-align:right;">$0.49</div>
<div class="t " style="top:1234.10px;font-size:28px;line-height:28px;color:#111;font-weight:400;letter-spacing:0.9px;left:1625px;width:240px;text-align:right;">$16.53</div>
<div class="t " style="top:1234.10px;font-size:28px;line-height:28px;color:#111;font-weight:400;letter-spacing:0.9px;left:1797px;width:240px;text-align:right;">$13.88</div>
<div class="t " style="top:1234.10px;font-size:28px;line-height:28px;color:#111;font-weight:400;letter-spacing:0.9px;left:2045px;width:240px;text-align:right;">$185.03K</div>
<div class="t " style="top:1234.10px;font-size:28px;line-height:28px;color:#111;font-weight:400;letter-spacing:0.9px;left:2293px;width:240px;text-align:right;">$27.66</div>
<div class="t " style="top:1326.10px;font-size:28px;line-height:28px;color:#111;font-weight:400;letter-spacing:0.9px;left:1281px;width:240px;text-align:right;">$71.4K</div>
<div class="t " style="top:1326.10px;font-size:28px;line-height:28px;color:#111;font-weight:400;letter-spacing:0.9px;left:1453px;width:240px;text-align:right;">$0.42</div>
<div class="t " style="top:1326.10px;font-size:28px;line-height:28px;color:#111;font-weight:400;letter-spacing:0.9px;left:1625px;width:240px;text-align:right;">$12.75</div>
<div class="t " style="top:1326.10px;font-size:28px;line-height:28px;color:#111;font-weight:400;letter-spacing:0.9px;left:1797px;width:240px;text-align:right;">$12.14</div>
<div class="t " style="top:1326.10px;font-size:28px;line-height:28px;color:#8a8a8a;font-weight:400;letter-spacing:0.9px;left:2045px;width:240px;text-align:right;">$146.69K</div>
<div class="t " style="top:1326.10px;font-size:28px;line-height:28px;color:#8a8a8a;font-weight:400;letter-spacing:0.9px;left:2293px;width:240px;text-align:right;">$23.33</div>
<div class="b" style="left:192px;top:662px;width:2360px;height:2px;background:#5a1ce6"></div>
<div class="b" style="left:192px;top:738px;width:2360px;height:2px;background:#5a1ce6"></div>
<div class="b" style="left:192px;top:832px;width:2360px;height:2px;background:#e7e7e7"></div>
<div class="b" style="left:192px;top:924px;width:2360px;height:2px;background:#e7e7e7"></div>
<div class="b" style="left:192px;top:1016px;width:2360px;height:2px;background:#e7e7e7"></div>
<div class="b" style="left:192px;top:1108px;width:2360px;height:2px;background:#e7e7e7"></div>
<div class="b" style="left:192px;top:1200px;width:2360px;height:2px;background:#e7e7e7"></div>
<div class="b" style="left:192px;top:1292px;width:2360px;height:2px;background:#e7e7e7"></div>
<div class="b" style="left:192px;top:1384px;width:2360px;height:2px;background:#e7e7e7"></div>
<div class="b" style="left:753px;top:1294px;width:138px;height:94px;box-sizing:border-box;border:4.5px solid #6620ff;border-radius:6px;background:repeating-linear-gradient(135deg,#fff 0 11px,#e4e4e4 11px 12.6px)"></div>
<div class="t " style="top:1326.10px;font-size:28px;line-height:28px;color:#111;font-weight:400;letter-spacing:0.9px;left:670px;width:200px;text-align:right;">$523</div>
<div class="b" style="left:454px;top:756px;width:994px;height:462px;background:#121212;border-radius:16px;box-shadow:0 4px 24px rgba(0,0,0,0.12)"></div>
<div class="t " style="top:791.10px;font-size:28px;line-height:28px;color:#fff;font-weight:700;letter-spacing:0.0px;left:487px;">Period 4</div>
<svg class="b" style="left:818px;top:828px;" width="48" height="48" viewBox="0 0 48 48" fill="none"><circle cx="24" cy="24" r="20" stroke="#fff" stroke-width="3.6"/><text x="24" y="35" text-anchor="middle" font-family="Liberation Sans" font-weight="700" font-size="32" fill="#fff">$</text></svg>
<svg class="b" style="left:996px;top:826px;" width="52" height="48" viewBox="0 0 52 48" fill="none"><path d="M23.5 9.8 Q26 5.6 28.5 9.8 L45.2 39 Q47.4 43 43 43 H9 Q4.6 43 6.8 39 Z" stroke="#fff" stroke-width="4" stroke-linejoin="round"/><text x="26" y="38.5" text-anchor="middle" font-family="Liberation Sans" font-weight="700" font-size="21" textLength="16" lengthAdjust="spacingAndGlyphs" fill="#fff">%</text></svg>
<svg class="b" style="left:1175px;top:832px;" width="54" height="40" viewBox="0 0 54 40" fill="none"><rect x="5" y="4" width="44" height="32" rx="5" stroke="#fff" stroke-width="4"/><text x="27" y="27" text-anchor="middle" font-family="Liberation Sans" font-weight="700" font-size="17.5" textLength="36" lengthAdjust="spacingAndGlyphs" fill="#fff">TAX</text></svg>
<div class="t " style="top:842.60px;font-size:28px;line-height:28px;color:#9a9a9a;font-weight:400;letter-spacing:0.0px;left:1115px;width:300px;text-align:right;">Relative %</div>
<div class="t " style="top:901.10px;font-size:28px;line-height:28px;color:#fff;font-weight:400;letter-spacing:0.9px;left:487px;">Installs</div>
<div class="t " style="top:901.10px;font-size:28px;line-height:28px;color:#fff;font-weight:400;letter-spacing:-0.4px;left:565px;width:300px;text-align:right;">1,487,081</div>
<div class="t " style="top:949.10px;font-size:28px;line-height:28px;color:#fff;font-weight:400;letter-spacing:0.9px;left:487px;">Subscriptions P4</div>
<div class="t " style="top:949.10px;font-size:28px;line-height:28px;color:#fff;font-weight:400;letter-spacing:0.9px;left:565px;width:300px;text-align:right;">7,232</div>
<div class="t " style="top:949.10px;font-size:28px;line-height:28px;color:#9a9a9a;font-weight:400;letter-spacing:-0.6px;left:1115px;width:300px;text-align:right;">7.82%</div>
<div class="t " style="top:997.10px;font-size:28px;line-height:28px;color:#fff;font-weight:400;letter-spacing:0.9px;left:487px;">Revenue P4</div>
<div class="t " style="top:997.10px;font-size:28px;line-height:28px;color:#fff;font-weight:400;letter-spacing:0.9px;left:565px;width:300px;text-align:right;">$51,449</div>
<div class="t " style="top:997.10px;font-size:28px;line-height:28px;color:#fff;font-weight:400;letter-spacing:0.9px;left:745px;width:300px;text-align:right;">$41,983</div>
<div class="t " style="top:997.10px;font-size:28px;line-height:28px;color:#fff;font-weight:400;letter-spacing:0.9px;left:926px;width:300px;text-align:right;">$40,980</div>
<div class="t " style="top:997.10px;font-size:28px;line-height:28px;color:#9a9a9a;font-weight:400;letter-spacing:-0.6px;left:1115px;width:300px;text-align:right;">6.15%</div>
<div class="t " style="top:1045.10px;font-size:28px;line-height:28px;color:#fff;font-weight:400;letter-spacing:0.9px;left:487px;">ARPU P4</div>
<div class="t " style="top:1045.10px;font-size:28px;line-height:28px;color:#fff;font-weight:400;letter-spacing:0.9px;left:565px;width:300px;text-align:right;">$0.03</div>
<div class="t " style="top:1045.10px;font-size:28px;line-height:28px;color:#fff;font-weight:400;letter-spacing:0.9px;left:745px;width:300px;text-align:right;">$0.03</div>
<div class="t " style="top:1045.10px;font-size:28px;line-height:28px;color:#fff;font-weight:400;letter-spacing:0.9px;left:926px;width:300px;text-align:right;">$0.03</div>
<div class="t " style="top:1093.10px;font-size:28px;line-height:28px;color:#fff;font-weight:400;letter-spacing:0.9px;left:487px;">ARPPU P4</div>
<div class="t " style="top:1093.10px;font-size:28px;line-height:28px;color:#fff;font-weight:400;letter-spacing:0.9px;left:565px;width:300px;text-align:right;">$7</div>
<div class="t " style="top:1093.10px;font-size:28px;line-height:28px;color:#fff;font-weight:400;letter-spacing:0.9px;left:745px;width:300px;text-align:right;">$6</div>
<div class="t " style="top:1093.10px;font-size:28px;line-height:28px;color:#fff;font-weight:400;letter-spacing:0.9px;left:926px;width:300px;text-align:right;">$6</div>
<div class="t " style="top:1141.10px;font-size:28px;line-height:28px;color:#fff;font-weight:400;letter-spacing:0.9px;left:487px;">ARPAS P4</div>
<div class="t " style="top:1141.10px;font-size:28px;line-height:28px;color:#fff;font-weight:400;letter-spacing:0.9px;left:565px;width:300px;text-align:right;">$7</div>
<div class="t " style="top:1141.10px;font-size:28px;line-height:28px;color:#fff;font-weight:400;letter-spacing:0.9px;left:745px;width:300px;text-align:right;">$6</div>
<div class="t " style="top:1141.10px;font-size:28px;line-height:28px;color:#fff;font-weight:400;letter-spacing:0.9px;left:926px;width:300px;text-align:right;">$6</div>
<svg class="b" style="left:997.5px;top:716.2px;filter:drop-shadow(0 1px 2px rgba(0,0,0,0.3))" width="40" height="56" viewBox="0 0 40 56" fill="none"><path d="M5 5 V44.7 L13.5 36.2 L22 48.9 L26.3 46.8 L19.2 31 L31.6 31 Z" fill="#000" stroke="#fff" stroke-width="5" stroke-linejoin="round" paint-order="stroke"/></svg>
<svg class="b" style="left:872.5px;top:1336px;filter:drop-shadow(0 1px 2px rgba(0,0,0,0.3))" width="40" height="56" viewBox="0 0 40 56" fill="none"><path d="M5 5 V44.7 L13.5 36.2 L22 48.9 L26.3 46.8 L19.2 31 L31.6 31 Z" fill="#000" stroke="#fff" stroke-width="5" stroke-linejoin="round" paint-order="stroke"/></svg>
</body></html>
